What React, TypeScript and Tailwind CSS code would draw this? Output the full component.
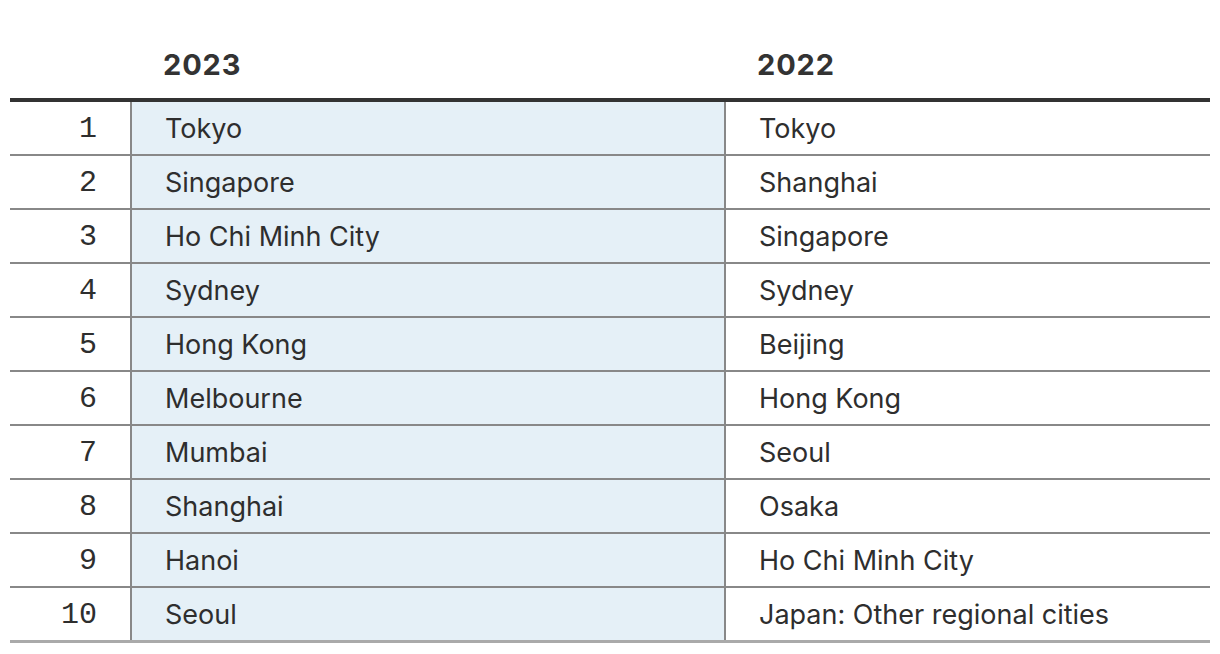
const rows: [string, string][] = [
  ['Tokyo', 'Tokyo'],
  ['Singapore', 'Shanghai'],
  ['Ho Chi Minh City', 'Singapore'],
  ['Sydney', 'Sydney'],
  ['Hong Kong', 'Beijing'],
  ['Melbourne', 'Hong Kong'],
  ['Mumbai', 'Seoul'],
  ['Shanghai', 'Osaka'],
  ['Hanoi', 'Ho Chi Minh City'],
  ['Seoul', 'Japan: Other regional cities'],
]

export default function App() {
  return (
    <div className="h-[654px] w-[1220px] bg-white px-[10px] text-[#2e2e2e] font-['Inter',sans-serif]">
      <div className="flex h-[98px] items-end pb-[12px] text-[29px] font-bold tracking-[0.03em] text-[#333]">
        <div className="w-[122px]" />
        <div className="w-[594px] pl-[31px]">2023</div>
        <div className="flex-1 pl-[31px]">2022</div>
      </div>
      <div className="border-t-4 border-[#333]">
        {rows.map(([a, b], i) => (
          <div
            key={i}
            className={`flex border-b-2 ${i === rows.length - 1 ? 'h-[55px] border-b-[3px] border-[#aaa]' : 'h-[54px] border-[#888]'}`}
          >
            <div className="flex w-[120px] items-center justify-end pt-[2px] pr-[33px] text-[30px] font-['Liberation_Mono',monospace]">
              {i + 1}
            </div>
            <div className="flex w-[596px] items-center border-x-2 border-[#888] bg-[#e5f0f7] pt-[2px] pl-[33px] text-[27px]">
              {a}
            </div>
            <div className="flex flex-1 items-center pt-[2px] pl-[33px] text-[27px]">{b}</div>
          </div>
        ))}
      </div>
    </div>
  )
}
